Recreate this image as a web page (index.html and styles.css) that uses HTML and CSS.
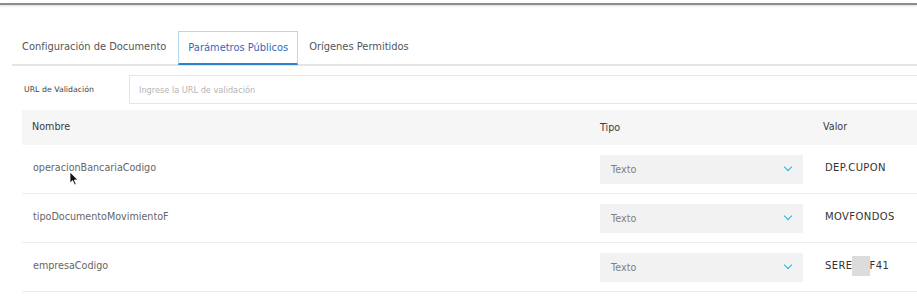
FILE: index.html
```html
<!DOCTYPE html>
<html lang="es">
<head>
    <meta charset="UTF-8">
    <meta name="viewport" content="width=device-width, initial-scale=1.0">
    <title>Parámetros Públicos</title>
    <link rel="stylesheet" href="styles.css">
</head>
<body>
    <div class="topline"></div>
    <div class="page">
        <div class="tabs">
            <div class="tab">Configuración de Documento</div>
            <div class="tab active">Parámetros Públicos</div>
            <div class="tab">Orígenes Permitidos</div>
        </div>

        <div class="url-row">
            <label class="url-label">URL de Validación</label>
            <input class="url-input" type="text" placeholder="Ingrese la URL de validación">
        </div>

        <div class="table">
            <div class="row head">
                <div class="cell">Nombre</div>
                <div class="cell">Tipo</div>
                <div class="cell">Valor</div>
            </div>
            <div class="row">
                <div class="cell name">operacionBancariaCodigo</div>
                <div class="cell"><div class="select">Texto <span class="chev"></span></div></div>
                <div class="cell value">DEP.CUPON</div>
            </div>
            <div class="row">
                <div class="cell name">tipoDocumentoMovimientoF</div>
                <div class="cell"><div class="select">Texto <span class="chev"></span></div></div>
                <div class="cell value">MOVFONDOS</div>
            </div>
            <div class="row">
                <div class="cell name">empresaCodigo</div>
                <div class="cell"><div class="select">Texto <span class="chev"></span></div></div>
                <div class="cell value">SERE<span class="blur"></span>F41</div>
            </div>
        </div>
    </div>

    <!-- mouse pointer from the capture -->
    <svg class="cursor" width="10" height="15" viewBox="0 0 10 15">
        <path d="M1 1 L1 12 L3.6 9.6 L5.6 14 L7.2 13.3 L5.3 9 L8.8 9 Z" fill="#111" stroke="#fff" stroke-width="0.8"/>
    </svg>
</body>
</html>
```

FILE: styles.css
```css
body {
    margin: 0;
    font-family: "DejaVu Sans", "Noto Sans", Arial, sans-serif;
    background: #fff;
    color: #555;
    overflow: hidden;
    position: relative;
    width: 917px;
    height: 300px;
}
.topline {
    margin-top: 3px;
    height: 2px;
    background: #8c8c8c;
    box-shadow: 0 1px 2px rgba(0, 0, 0, 0.15);
}
.page {
    width: 960px;
    padding-left: 12px;
}
.tabs {
    display: flex;
    margin-top: 26px;
    border-bottom: 2px solid #e2e5e7;
    height: 33px;
}
.tab {
    font-size: 9.9px;
    line-height: 31px;
    padding: 0 12px 0 10px;
    color: #555;
}
.tab.active {
    color: #3568b8;
    border: 1px solid #b8d6f0;
    border-bottom: 2px solid #2f7fd0;
    padding: 0 9px;
    margin-right: 1px;
    height: 31px;
}
.url-row {
    display: flex;
    align-items: center;
    margin-top: 9px;
    height: 29px;
}
.url-label {
    font-size: 7.8px;
    color: #444;
    width: 105px;
    padding-left: 12px;
}
.url-input {
    flex: 1;
    height: 29px;
    box-sizing: border-box;
    border: 1px solid #e6e6e6;
    padding: 0 9px;
    font-family: inherit;
    font-size: 8.2px;
    color: #555;
    outline: none;
}
.url-input::placeholder {
    color: #b5b5b5;
}
.table {
    margin: 6px 0 0 10px;
}
.row {
    display: grid;
    grid-template-columns: 568px 223px 1fr;
    align-items: center;
    height: 48px;
    border-bottom: 1px solid #ececec;
}
.row > .cell {
    margin-top: -3px;
}
.row.head {
    height: 35px;
    background: #f6f6f6;
    border-bottom: none;
    font-size: 9.6px;
    color: #3a3a3a;
}
.cell {
    padding-left: 10px;
}
.name {
    font-size: 9.6px;
    color: #666;
    padding-left: 11px;
}
.value {
    font-size: 10px;
    letter-spacing: 0.4px;
    color: #333;
    display: flex;
    align-items: center;
    padding-left: 12px;
}
.row > .cell:nth-child(2) {
    margin-top: 0;
}
.select {
    display: flex;
    align-items: center;
    justify-content: space-between;
    width: 203px;
    height: 29px;
    box-sizing: border-box;
    background: #f2f2f2;
    padding: 0 12px 0 11px;
    font-size: 9.6px;
    color: #808080;
}
.chev {
    width: 5px;
    height: 5px;
    border-right: 1.6px solid #1fb5d6;
    border-bottom: 1.6px solid #1fb5d6;
    transform: rotate(45deg);
    margin-top: -4px;
}
.blur {
    display: inline-block;
    width: 18px;
    height: 20px;
    background: #dcdcdc;
    margin: 0 0 0 -1px;
}
.cursor {
    position: absolute;
    left: 69px;
    top: 171px;
}
```
